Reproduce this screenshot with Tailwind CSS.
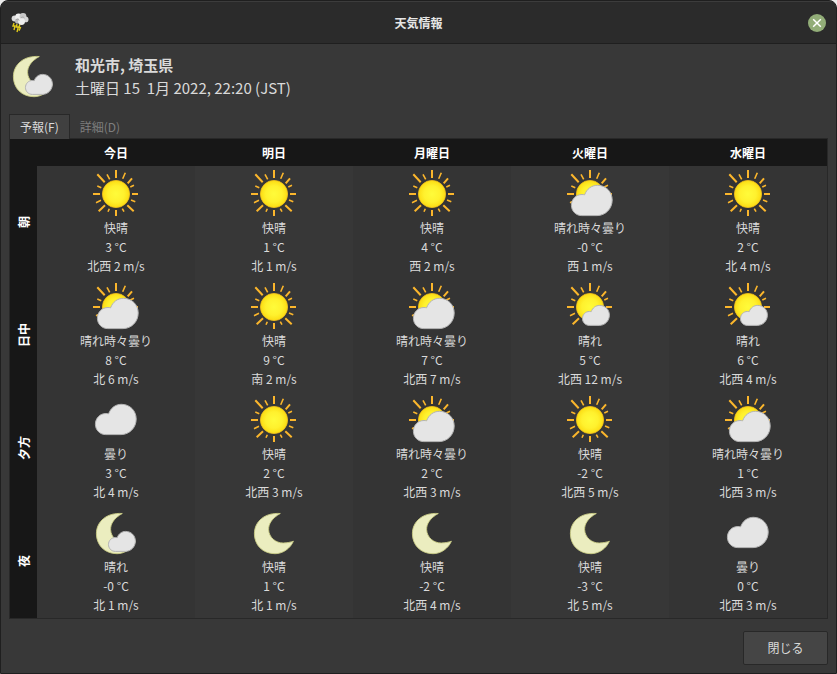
<!DOCTYPE html>
<html lang="ja" class="bg-[#ececec]">
<head>
  <meta charset="UTF-8" />
  <meta name="viewport" content="width=device-width, initial-scale=1" />
  <title>天気情報</title>
  <script src="https://cdn.jsdelivr.net/npm/@tailwindcss/browser@4"></script>
  <style>
    body, button {
      font-family: 'Noto Sans CJK JP', sans-serif;
    }
  </style>
</head>
<body class="min-h-screen flex flex-col rounded-t-lg border border-[#1f1f1f] bg-[#383838] text-xs text-[#dadada] overflow-hidden">

  <!-- icon definitions -->
  <svg class="size-0" aria-hidden="true">
    <defs>
      <radialGradient id="sunFill">
        <stop offset="0" stop-color="#fffb3a" />
        <stop offset="0.6" stop-color="#fff12e" />
        <stop offset="1" stop-color="#fbdc12" />
      </radialGradient>
      <path id="cloudShape" d="M15.8 45.6C9.7 45.6 5.4 40.8 5.4 35.2C5.4 29.4 9.8 24.5 16 24.5Q17.3 24.5 18.6 24.8C20.8 19 25.4 15.3 31.4 15.3C40 15.3 46.2 21.8 46.2 30C46.2 38.6 39.6 45.6 31 45.6Z" fill="#e5e5e5" stroke="#b4b4b4" vector-effect="non-scaling-stroke" />
      <g id="upperRays" stroke="#fbb62c">
        <path d="M24 8V0M8 24H1M40 24h6M12.7 12.3L5.3 4.3M35.7 13.3L40 8.3" stroke-width="2" />
        <path d="M17.7 9.3L15 4.3M30.7 8.7L33.3 2.7M9.3 17.7L5.3 16M9 30.3L4 32.7M38.3 17L42 15.3" stroke-width="1.6" />
      </g>
      <path id="leftRay" d="M13 35.3L6.7 41.3" stroke="#fbb62c" stroke-width="2" />
      <g id="lowerRays" stroke="#fbb62c">
        <path d="M24 40v6M35.3 35.3L41.7 41.3" stroke-width="2" />
        <path d="M39 30L43.3 31.7M17.3 38.7L16 41.7M30.3 38.7L32 41.7" stroke-width="1.6" />
      </g>
      <circle id="sunDisc" cx="24" cy="24" r="13.6" fill="url(#sunFill)" stroke="#f5c21c" stroke-width="0.8" />
      <path id="moonShape" d="M30.3 4.5C22 9 18.5 15 18.6 20.5C18.8 28.5 26 34.2 33.3 34C37.3 33.9 40.6 33.2 43.4 32.2C40.4 39.4 32.8 44.7 25 44.7C12.5 44.7 4.4 35.8 4.4 24.8C4.4 12.2 15 3.4 30.3 4.5Z" fill="#ebedbf" stroke="#c9cc86" stroke-width="0.9" />
      <g id="smallCloud"><use href="#cloudShape" transform="translate(12.9 12.3) scale(0.66)" /></g>
    </defs>
    <symbol id="clear" viewBox="0 0 48 48"><use href="#upperRays" /><use href="#leftRay" /><use href="#lowerRays" /><use href="#sunDisc" /></symbol>
    <symbol id="few" viewBox="0 0 48 48"><use href="#upperRays" /><use href="#leftRay" /><use href="#sunDisc" /><use href="#smallCloud" /></symbol>
    <symbol id="partly" viewBox="0 0 48 48"><use href="#upperRays" /><use href="#sunDisc" /><use href="#cloudShape" /></symbol>
    <symbol id="cloudy" viewBox="0 0 48 48"><use href="#cloudShape" transform="translate(-2 -7)" /></symbol>
    <symbol id="night" viewBox="0 0 48 48"><use href="#moonShape" /></symbol>
    <symbol id="nightFew" viewBox="0 0 48 48"><use href="#moonShape" /><use href="#smallCloud" /></symbol>
  </svg>

  <header class="flex h-[43px] items-center justify-between border-t border-b border-t-[#3c3c3c] border-b-[#1f1f1f] bg-[#2b2b2b] px-2">
    <svg class="size-6" viewBox="0 0 24 24" aria-hidden="true">
      <path d="M5 12L4 15L6 15L5 19M8 13L7.4 16L9.4 16L8 21M11 13L10 16L11.4 16.6L10 19.6" fill="none" stroke="#e0ca1a" stroke-width="1.4" />
      <circle cx="5.6" cy="7.6" r="3" fill="#dcdcdc" />
      <circle cx="9.6" cy="6" r="3.4" fill="#f0f0f0" />
      <circle cx="14" cy="5.4" r="3.4" fill="#c9c9c9" />
      <circle cx="16.6" cy="8.4" r="2.9" fill="#d6d6d6" />
      <circle cx="8.6" cy="10" r="2.6" fill="#b9b9b9" />
      <circle cx="12.6" cy="10.6" r="3.4" fill="#ededed" />
      <path d="M12 6.6Q14 5 15.6 7M7 8.6Q9 7.4 10.4 9.4" fill="none" stroke="#a2a2a2" stroke-width="0.8" />
    </svg>
    <h1 class="font-bold text-[#e6e6e6]">天気情報</h1>
    <div class="flex w-6 justify-end pr-0.5">
      <button class="flex size-[18px] items-center justify-center rounded-full bg-[#92ad78]" aria-label="ウィンドウを閉じる">
        <svg class="size-[18px]" viewBox="0 0 18 18"><path d="M5.2 5.2l7.6 7.6M12.8 5.2l-7.6 7.6" stroke="#fff" stroke-width="1.5" /></svg>
      </button>
    </div>
  </header>

  <main class="flex grow flex-col p-2">
    <div class="flex items-center gap-[18px]">
      <svg class="size-12"><use href="#nightFew" /></svg>
      <div class="text-[15px] leading-[23px]">
        <h2 class="font-bold">和光市, 埼玉県</h2>
        <p class="whitespace-pre">土曜日 15  1月 2022, 22:20 (JST)</p>
      </div>
    </div>

    <div class="relative z-10 mt-3.5 -mb-px flex h-[25px]" role="tablist">
      <button class="border border-b-0 border-[#282828] bg-[#404040] px-2.5" role="tab" aria-selected="true" aria-controls="forecast">予報(F)</button>
      <button class="px-2.5 text-[#7e7e7e]" role="tab" aria-selected="false">詳細(D)</button>
    </div>

    <div id="forecast" class="grow border border-[#282828]" role="tabpanel">
      <table class="w-full table-fixed text-center">
        <colgroup>
          <col class="w-[27px] bg-[#171717]" />
          <col class="bg-[#343434]" />
          <col class="bg-[#373737]" />
          <col class="bg-[#343434]" />
          <col class="bg-[#373737]" />
          <col class="bg-[#343434]" />
        </colgroup>
        <thead>
          <tr class="h-[27px] bg-[#171717] text-white">
            <td></td>
            <th scope="col">今日</th>
            <th scope="col">明日</th>
            <th scope="col">月曜日</th>
            <th scope="col">火曜日</th>
            <th scope="col">水曜日</th>
          </tr>
        </thead>
        <tbody id="forecastBody"></tbody>
      </table>
    </div>

    <div class="mt-3 flex justify-end">
      <button class="h-[34px] w-[85px] rounded-xs border border-[#282828] bg-[#454545]">閉じる</button>
    </div>
  </main>

  <script>
    // [icon, condition, temperature, wind]
    const forecast = [
      ['朝', [
        ['clear', '快晴', '3', '北西 2'],
        ['clear', '快晴', '1', '北 1'],
        ['clear', '快晴', '4', '西 2'],
        ['partly', '晴れ時々曇り', '-0', '西 1'],
        ['clear', '快晴', '2', '北 4']
      ]],
      ['日中', [
        ['partly', '晴れ時々曇り', '8', '北 6'],
        ['clear', '快晴', '9', '南 2'],
        ['partly', '晴れ時々曇り', '7', '北西 7'],
        ['few', '晴れ', '5', '北西 12'],
        ['few', '晴れ', '6', '北西 4']
      ]],
      ['夕方', [
        ['cloudy', '曇り', '3', '北 4'],
        ['clear', '快晴', '2', '北西 3'],
        ['partly', '晴れ時々曇り', '2', '北西 3'],
        ['clear', '快晴', '-2', '北西 5'],
        ['partly', '晴れ時々曇り', '1', '北西 3']
      ]],
      ['夜', [
        ['nightFew', '晴れ', '-0', '北 1'],
        ['night', '快晴', '1', '北 1'],
        ['night', '快晴', '-2', '北西 4'],
        ['night', '快晴', '-3', '北 5'],
        ['cloudy', '曇り', '0', '北西 3']
      ]]
    ];

    const tbody = document.getElementById('forecastBody');
    forecast.forEach(([period, cells]) => {
      const tr = document.createElement('tr');
      tr.innerHTML =
        '<th scope="row" class="text-white"><div class="flex justify-center"><span class="rotate-180 [writing-mode:vertical-rl] [text-orientation:sideways]">' + period + '</span></div></th>' +
        cells.map(([icon, condition, temp, wind]) =>
          '<td class="py-1 leading-[19px]">' +
            '<svg class="mx-auto size-12"><use href="#' + icon + '" /></svg>' +
            '<p>' + condition + '</p>' +
            '<p>' + temp + ' °C</p>' +
            '<p>' + wind + ' m/s</p>' +
          '</td>').join('');
      tbody.appendChild(tr);
    });
  </script>
</body>
</html>
